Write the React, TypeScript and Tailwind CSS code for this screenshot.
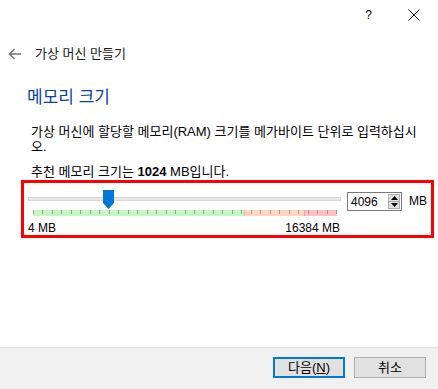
import React from "react";

const MIN = 4;
const MAX = 16384;
const VALUE = 4096;
const STRIP_W = 304;

function BackArrow() {
  return (
    <svg width="14" height="12" viewBox="0 0 14 12" fill="none">
      <path d="M1.5 6 H13 M6.5 1 L1.5 6 L6.5 11" stroke="#777" strokeWidth="1.6" />
    </svg>
  );
}

function CloseIcon() {
  return (
    <svg width="12" height="12" viewBox="0 0 12 12" fill="none">
      <path d="M0.5 0.5 L11.5 11.5 M11.5 0.5 L0.5 11.5" stroke="#111" strokeWidth="1" />
    </svg>
  );
}

function Thumb() {
  return (
    <svg width="11" height="19" viewBox="0 0 11 19">
      <path d="M0 0 H11 V13 L5.5 19 L0 13 Z" fill="#0078d7" />
    </svg>
  );
}

function Spin() {
  return (
    <div className="flex h-[15px] w-[12px] flex-col border border-[#adadad] bg-[#e1e1e1]">
      <div className="flex flex-1 items-center justify-center border-b border-[#adadad]">
        <svg width="7" height="4" viewBox="0 0 7 4">
          <path d="M0 4 L3.5 0 L7 4 Z" fill="#000" />
        </svg>
      </div>
      <div className="flex flex-1 items-center justify-center">
        <svg width="7" height="4" viewBox="0 0 7 4">
          <path d="M0 0 L3.5 4 L7 0 Z" fill="#000" />
        </svg>
      </div>
    </div>
  );
}

export default function App() {
  const thumbLeft = 5 + ((VALUE - MIN) / (MAX - MIN)) * STRIP_W - 5.5;
  const ticks = Array.from({ length: 33 });

  return (
    <div className="flex h-[389px] w-[438px] flex-col bg-white text-[12px] text-black font-['Liberation_Sans','Noto_Sans_CJK_KR',sans-serif]">
      {/* title bar */}
      <div className="flex h-[30px] items-center justify-end pr-[18px]">
        <span className="mr-[36px] text-[12px] leading-none">?</span>
        <CloseIcon />
      </div>

      <div className="flex-1">
        <div className="flex h-[48px] items-center pl-[8px]">
          <BackArrow />
          <span className="ml-[13px] text-[13px] text-[#1a1a1a]">가상 머신 만들기</span>
        </div>

        <h1 className="mt-[10px] pl-[27px] text-[17px] leading-[20px] text-[#0a3fa8]">메모리 크기</h1>

        <p className="mt-[16px] pl-[31px] text-[13px] leading-[15px]">
          가상 머신에 할당할 메모리(RAM) 크기를 메가바이트 단위로 입력하십시
          <br />
          오.
        </p>
        <p className="mt-[10px] pl-[31px] text-[13px] leading-[15px]">
          추천 메모리 크기는 <b>1024</b> MB입니다.
        </p>

        <div className="ml-[21px] mt-[1px] flex h-[58px] w-[413px] items-start border-[3px] border-[#ff0000] pl-[4px]">
          <div className="w-[313px]">
            <div className="relative h-[18px]">
              <div className="absolute left-0 top-[14px] h-[4px] w-[313px] border border-[#d6d6d6] bg-[#e7e7e7]" />
              <div className="absolute top-[7px]" style={{ left: thumbLeft }}>
                <Thumb />
              </div>
            </div>
            <div className="relative ml-[5px] mt-[9px] flex h-[6px] w-[304px]">
              <div className="w-[211px] bg-[#c5f7c0]" />
              <div className="w-[60px] border-l border-[#f5b8a0] bg-[#ffd5c0]" />
              <div className="flex-1 border-l border-[#f59c9c] bg-[#ffc0c0]" />
              <div className="absolute inset-x-0 top-0 flex justify-between">
                {ticks.map((_, i) => (
                  <div key={i} className="h-[4px] w-px bg-[#999]" />
                ))}
              </div>
            </div>
            <div className="mt-[5px] flex justify-between pr-px leading-[14px]">
              <span>4 MB</span>
              <span>16384 MB</span>
            </div>
          </div>

          <div className="ml-[6px] mt-[9px] flex h-[19px] w-[55px] items-center justify-between border border-[#7a7a7a] bg-white pl-[3px] pr-[1px]">
            <span className="leading-none">4096</span>
            <Spin />
          </div>
          <span className="ml-[7px] mt-[12px] leading-none">MB</span>
        </div>
      </div>

      {/* footer */}
      <div className="flex h-[42px] justify-end gap-[9px] border-t border-[#dfdfdf] bg-[#f0f0f0] pr-[12px] pt-[9px]">
        <button className="flex h-[21px] w-[72px] items-center justify-center border-2 border-[#0078d7] bg-[#e1e1e1] text-[13px] leading-none">
          다음(<span className="underline">N</span>)
        </button>
        <button className="flex h-[21px] w-[72px] items-center justify-center border border-[#adadad] bg-[#e1e1e1] text-[13px] leading-none">
          취소
        </button>
      </div>
    </div>
  );
}
